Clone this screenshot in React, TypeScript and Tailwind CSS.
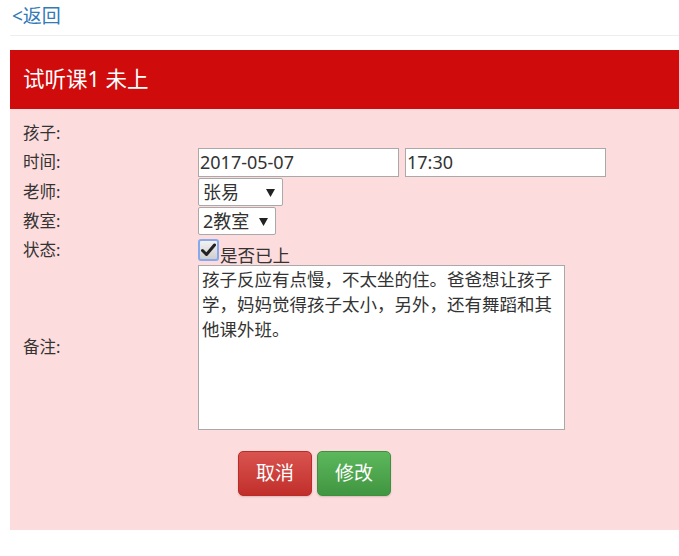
import React from 'react';

const font = { fontFamily: '"Noto Sans", "Noto Sans CJK SC", sans-serif' };

function Row({ label, height, children }: { label: string; height: string; children?: React.ReactNode }) {
  return (
    <div className={`flex items-center ${height}`}>
      <div className="w-[175px] shrink-0 text-[16.5px] text-[#333]">{label}</div>
      <div className="flex items-center gap-[6px]">{children}</div>
    </div>
  );
}

function FakeSelect({ value, width }: { value: string; width: string }) {
  return (
    <div className={`flex h-[28px] ${width} items-center justify-between rounded-[2px] border border-[#a9a9a9] bg-white pl-[4px] pr-[7px] text-[18px] leading-none text-[#333]`}>
      <span>{value}</span>
      <svg width="9" height="9" viewBox="0 0 9 9">
        <polygon points="0,1 9,1 4.5,9" fill="#222" />
      </svg>
    </div>
  );
}

export default function App() {
  return (
    <div className="min-h-[556px] bg-white pl-[10px]" style={font}>
      <div className="h-[36px] border-b border-[#eee] pl-[2px] pt-[2px]">
        <a href="#" className="text-[19px] leading-[28px] text-[#337ab7]">&lt;返回</a>
      </div>

      <div className="mt-[14px]">
        <div className="flex h-[59px] items-center bg-[#cf0b0b] px-[13px] text-[21.5px] text-white">
          试听课1 未上
        </div>

        <div className="bg-[#fddcdd] px-[13px] pb-[34px] pt-[10px]">
          <Row label="孩子:" height="h-[28px]" />
          <Row label="时间:" height="h-[31px]">
            <div className="flex h-[29px] w-[201px] items-center border border-[#a9a9a9] bg-white pl-[1px] text-[18px] text-[#333]">
              2017-05-07
            </div>
            <div className="flex h-[29px] w-[201px] items-center border border-[#a9a9a9] bg-white pl-[1px] text-[18px] text-[#333]">
              17:30
            </div>
          </Row>
          <Row label="老师:" height="h-[28px]">
            <FakeSelect value="张易" width="w-[85px]" />
          </Row>
          <Row label="教室:" height="h-[30px]">
            <FakeSelect value="2教室" width="w-[78px]" />
          </Row>
          <Row label="状态:" height="h-[28px]">
            <div className="flex items-end">
              <div className="flex h-[22px] w-[21px] items-center justify-center rounded-[3px] border-2 border-[#86a8ec] bg-gradient-to-b from-[#f2f2f2] to-[#cfcfcf]">
                <svg width="15" height="14" viewBox="0 0 15 14">
                  <path d="M1.5 7.5 L5.5 11.5 L13.5 2" fill="none" stroke="#222" strokeWidth="3" strokeLinecap="round" strokeLinejoin="round" />
                </svg>
              </div>
              <span className="ml-[1px] translate-y-[3px] text-[17.5px] leading-none text-[#333]">是否已上</span>
            </div>
          </Row>
          <Row label="备注:" height="h-[167px]">
            <div className="h-[165px] w-[367px] whitespace-pre-line border border-[#a9a9a9] bg-white px-[3px] pt-[1px] text-[17.5px] leading-[25px] text-[#333]">
              {'孩子反应有点慢，不太坐的住。爸爸想让孩子\n学，妈妈觉得孩子太小，另外，还有舞蹈和其\n他课外班。'}
            </div>
          </Row>

          <div className="ml-[215px] mt-[20px] flex gap-[5px]">
            <button className="h-[45px] w-[74px] rounded-[5px] border border-[#b92c28] bg-gradient-to-b from-[#d9534f] to-[#c12e2a] text-[19px] text-white shadow-[0_1px_2px_rgba(0,0,0,0.15)]">
              取消
            </button>
            <button className="h-[45px] w-[74px] rounded-[5px] border border-[#3e8f3e] bg-gradient-to-b from-[#5cb85c] to-[#419641] text-[19px] text-white shadow-[0_1px_2px_rgba(0,0,0,0.15)]">
              修改
            </button>
          </div>
        </div>
      </div>
    </div>
  );
}
